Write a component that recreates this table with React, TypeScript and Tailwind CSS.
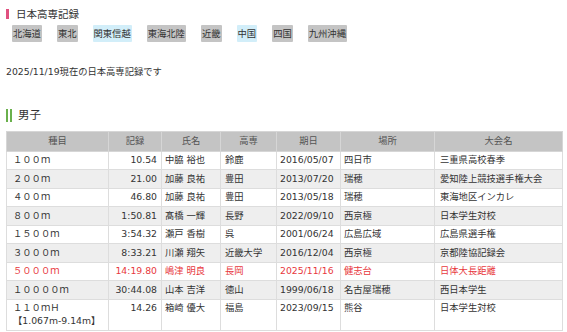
const regions = [
  { name: '北海道', active: false },
  { name: '東北', active: false },
  { name: '関東信越', active: true },
  { name: '東海北陸', active: false },
  { name: '近畿', active: false },
  { name: '中国', active: true },
  { name: '四国', active: false },
  { name: '九州沖縄', active: false },
];

type RecordRow = {
  event: string;
  sub?: string;
  mark: string;
  name: string;
  school: string;
  date: string;
  place: string;
  meet: string;
  isNew?: boolean;
};

const rows: RecordRow[] = [
  { event: '１００ｍ', mark: '10.54', name: '中脇 裕也', school: '鈴鹿', date: '2016/05/07', place: '四日市', meet: '三重県高校春季' },
  { event: '２００ｍ', mark: '21.00', name: '加藤 良祐', school: '豊田', date: '2013/07/20', place: '瑞穂', meet: '愛知陸上競技選手権大会' },
  { event: '４００ｍ', mark: '46.80', name: '加藤 良祐', school: '豊田', date: '2013/05/18', place: '瑞穂', meet: '東海地区インカレ' },
  { event: '８００ｍ', mark: '1:50.81', name: '髙橋 一輝', school: '長野', date: '2022/09/10', place: '西京極', meet: '日本学生対校' },
  { event: '１５００ｍ', mark: '3:54.32', name: '瀬戸 香樹', school: '呉', date: '2001/06/24', place: '広島広域', meet: '広島県選手権' },
  { event: '３０００ｍ', mark: '8:33.21', name: '川瀬 翔矢', school: '近畿大学', date: '2016/12/04', place: '西京極', meet: '京都陸協記録会' },
  { event: '５０００ｍ', mark: '14:19.80', name: '嶋津 明良', school: '長岡', date: '2025/11/16', place: '健志台', meet: '日体大長距離', isNew: true },
  { event: '１００００ｍ', mark: '30:44.08', name: '山本 吉洋', school: '徳山', date: '1999/06/18', place: '名古屋瑞穂', meet: '西日本学生' },
  { event: '１１０ｍＨ', sub: '【1.067m-9.14m】', mark: '14.26', name: '箱崎 優大', school: '福島', date: '2023/09/15', place: '熊谷', meet: '日本学生対校' },
];

const headers = ['種目', '記録', '氏名', '高専', '期日', '場所', '大会名'];

export default function App() {
  return (
    <div className="min-h-screen bg-white text-[#333] font-['DejaVu_Sans','Noto_Sans_CJK_JP',sans-serif]">
      <div className="px-[6px] pt-[8px]">
        {/* page title */}
        <h1 className="flex items-center gap-[7px] text-[10.5px] leading-[12px] font-normal">
          <span className="w-[3px] h-[10px] bg-[#e0507f]"></span>
          日本高専記録
        </h1>

        <div className="flex gap-[15px] pl-[6px] mt-[5px]">
          {regions.map((r) => (
            <span
              key={r.name}
              className={`h-[17px] px-[1px] flex items-center text-[9.3px] rounded-[1px] ${
                r.active ? 'bg-[#d2eef9]' : 'bg-[#c4c4c4]'
              }`}
            >
              {r.name}
            </span>
          ))}
        </div>

        <p className="mt-[23px] text-[9.3px] leading-[14px]">2025/11/19現在の日本高専記録です</p>

        <h2 className="mt-[30px] flex items-center gap-[6px] text-[11.5px] leading-[13px] font-normal">
          <span className="flex gap-[2px]">
            <span className="w-[2px] h-[13px] bg-[#6ab04c]"></span>
            <span className="w-[2px] h-[13px] bg-[#6ab04c]"></span>
          </span>
          男子
        </h2>

        <table className="mt-[9px] table-fixed border-collapse w-[556px] text-[9.3px] leading-[12.5px]">
          <colgroup>
            <col className="w-[102px]" />
            <col className="w-[53px]" />
            <col className="w-[59px]" />
            <col className="w-[56px]" />
            <col className="w-[64px]" />
            <col className="w-[94px]" />
            <col className="w-[128px]" />
          </colgroup>
          <thead>
            <tr className="bg-[#c4c4c4] text-[#555]">
              {headers.map((h) => (
                <th key={h} className="font-normal text-center py-[3px] border border-[#d6d6d6]">
                  {h}
                </th>
              ))}
            </tr>
          </thead>
          <tbody>
            {rows.map((r, i) => (
              <tr
                key={r.event}
                className={`${i % 2 === 1 ? 'bg-[#eeeeee]' : 'bg-white'} ${r.isNew ? 'text-[#e8383d]' : ''} align-top`}
              >
                <td className="pl-[6px] py-[2.5px] border border-[#dddddd]">
                  <div>{r.event}</div>
                  {r.sub && <div>{r.sub}</div>}
                </td>
                <td className="pr-[4px] py-[2.5px] text-right border border-[#dddddd]">{r.mark}</td>
                <td className="px-[3px] py-[2.5px] border border-[#dddddd] whitespace-nowrap">{r.name}</td>
                <td className="px-[4px] py-[2.5px] border border-[#dddddd] whitespace-nowrap">{r.school}</td>
                <td className="px-[3px] py-[2.5px] border border-[#dddddd]">{r.date}</td>
                <td className="px-[3px] py-[2.5px] border border-[#dddddd]">{r.place}</td>
                <td className="px-[5px] py-[2.5px] border border-[#dddddd] whitespace-nowrap">{r.meet}</td>
              </tr>
            ))}
          </tbody>
        </table>
      </div>
    </div>
  );
}
